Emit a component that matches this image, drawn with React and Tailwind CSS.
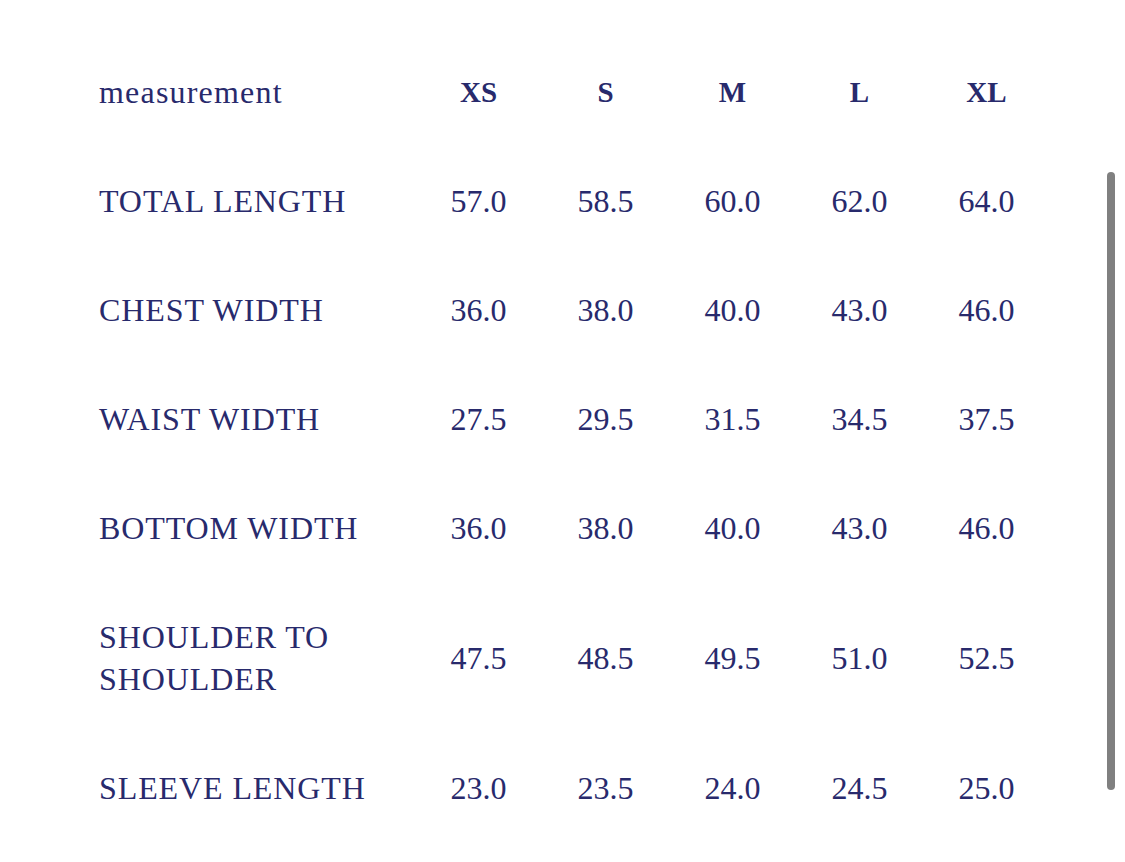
import React from 'react';

const sizes = ['XS', 'S', 'M', 'L', 'XL'];

const rows = [
  { label: 'TOTAL LENGTH', values: ['57.0', '58.5', '60.0', '62.0', '64.0'] },
  { label: 'CHEST WIDTH', values: ['36.0', '38.0', '40.0', '43.0', '46.0'] },
  { label: 'WAIST WIDTH', values: ['27.5', '29.5', '31.5', '34.5', '37.5'] },
  { label: 'BOTTOM WIDTH', values: ['36.0', '38.0', '40.0', '43.0', '46.0'] },
  { label: ['SHOULDER TO', 'SHOULDER'], values: ['47.5', '48.5', '49.5', '51.0', '52.5'] },
  { label: 'SLEEVE LENGTH', values: ['23.0', '23.5', '24.0', '24.5', '25.0'] },
];

const App = () => {
  return (
    <div className="relative min-h-screen bg-white text-[#282a6c] font-['Liberation_Serif',serif] overflow-hidden">
      <div className="pl-[99px] pt-[37px]">
        {/* header row */}
        <div className="grid grid-cols-[316px_repeat(5,127px)] items-center h-[109px]">
          <div className="text-[32px] leading-[44px] tracking-[1.2px]">measurement</div>
          {sizes.map((s) => (
            <div key={s} className="text-center font-bold text-[29px] leading-[44px]">
              {s}
            </div>
          ))}
        </div>

        {/* measurement rows */}
        {rows.map((row, i) => (
          <div
            key={i}
            className="grid grid-cols-[316px_repeat(5,127px)] items-center py-[33.5px] text-[32px] leading-[42px]"
          >
            <div className="tracking-[0.9px]">
              {Array.isArray(row.label)
                ? row.label.map((l) => <div key={l}>{l}</div>)
                : row.label}
            </div>
            {row.values.map((v, j) => (
              <div key={j} className="text-center">
                {v}
              </div>
            ))}
          </div>
        ))}
      </div>

      {/* scrollbar thumb */}
      <div className="absolute left-[1107px] top-[172px] w-[8px] h-[618px] rounded-full bg-[#808080]" />
    </div>
  );
};

export default App;
